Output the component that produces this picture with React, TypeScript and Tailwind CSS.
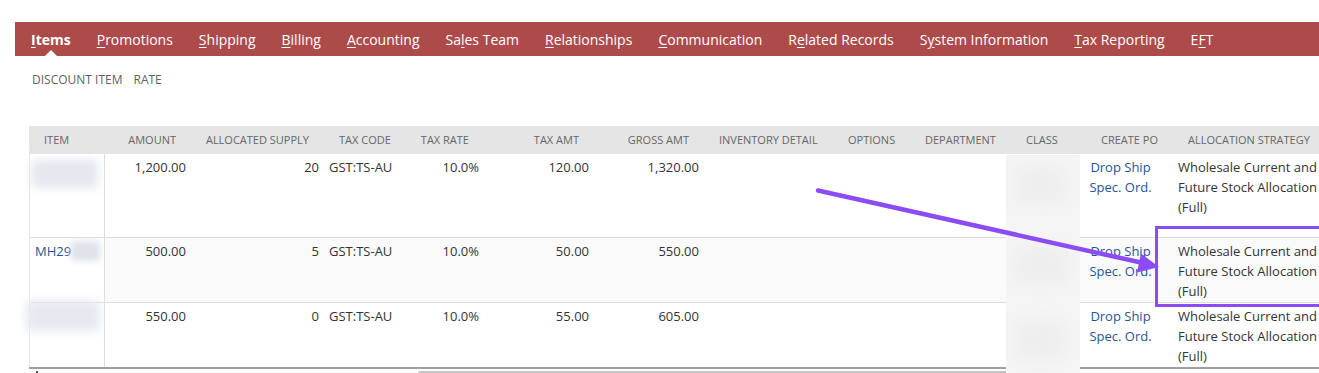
import React from "react";

const font = { fontFamily: '"Open Sans", "Liberation Sans", sans-serif' };

function Tab({ label, u, bold }: { label: string; u: number; bold?: boolean }) {
  return (
    <span className={`relative text-[14px] text-white whitespace-nowrap ${bold ? "font-bold" : ""}`}>
      {label.slice(0, u)}
      <span className="underline underline-offset-2">{label[u]}</span>
      {label.slice(u + 1)}
      {bold && (
        <span className="absolute left-1/2 -translate-x-1/2 top-[21px] w-0 h-0 border-l-[6px] border-r-[6px] border-b-[6px] border-l-transparent border-r-transparent border-b-white" />
      )}
    </span>
  );
}

const cols = [76, 91, 128, 77, 88, 110, 110, 123, 78, 101, 65, 92, 170];

const headers: { t: string; cls: string }[] = [
  { t: "ITEM", cls: "justify-start pl-[15px]" },
  { t: "AMOUNT", cls: "justify-end pr-[20px]" },
  { t: "ALLOCATED SUPPLY", cls: "justify-end pr-[15px]" },
  { t: "TAX CODE", cls: "justify-start pl-[15px]" },
  { t: "TAX RATE", cls: "justify-end pr-[20px]" },
  { t: "TAX AMT", cls: "justify-end pr-[20px]" },
  { t: "GROSS AMT", cls: "justify-end pr-[20px]" },
  { t: "INVENTORY DETAIL", cls: "justify-start pl-[10px]" },
  { t: "OPTIONS", cls: "justify-start pl-[16px]" },
  { t: "DEPARTMENT", cls: "justify-start pl-[15px]" },
  { t: "CLASS", cls: "justify-start pl-[15px]" },
  { t: "CREATE PO", cls: "justify-start pl-[25px]" },
  { t: "ALLOCATION STRATEGY", cls: "justify-start pl-[20px]" },
];

type Row = {
  h: number;
  bg: string;
  item: React.ReactNode;
  amount: string;
  supply: string;
  taxAmt: string;
  gross: string;
};

const rows: Row[] = [
  {
    h: 84,
    bg: "bg-white",
    item: (
      <div className="absolute left-[2px] top-[6px] w-[66px] h-[28px] bg-[#e4e7ee] blur-[5px]" />
    ),
    amount: "1,200.00",
    supply: "20",
    taxAmt: "120.00",
    gross: "1,320.00",
  },
  {
    h: 65,
    bg: "bg-[#fafafa]",
    item: (
      <>
        <span className="text-[#255599] pl-[5px]">MH29</span>
        <div className="absolute left-[41px] top-[3px] w-[29px] h-[20px] bg-[#dfe3ea] blur-[3px]" />
      </>
    ),
    amount: "500.00",
    supply: "5",
    taxAmt: "50.00",
    gross: "550.00",
  },
  {
    h: 64,
    bg: "bg-white",
    item: (
      <div className="absolute left-[-4px] top-[-2px] w-[74px] h-[30px] bg-[#e6e9ef] blur-[5px]" />
    ),
    amount: "550.00",
    supply: "0",
    taxAmt: "55.00",
    gross: "605.00",
  },
];

function Cell({ w, className, children }: { w: number; className?: string; children?: React.ReactNode }) {
  return (
    <div className={`shrink-0 ${className ?? ""}`} style={{ width: w }}>
      {children}
    </div>
  );
}

export default function App() {
  return (
    <div className="relative w-[1319px] h-[373px] overflow-hidden bg-white" style={font}>
      <div className="pt-[22px]">
        <div className="ml-[15px] h-[34px] bg-[#ad4b4b] flex items-center pl-[16px] gap-[26px]">
          <Tab label="Items" u={0} bold />
          <Tab label="Promotions" u={0} />
          <Tab label="Shipping" u={0} />
          <Tab label="Billing" u={0} />
          <Tab label="Accounting" u={0} />
          <Tab label="Sales Team" u={2} />
          <Tab label="Relationships" u={0} />
          <Tab label="Communication" u={0} />
          <Tab label="Related Records" u={1} />
          <Tab label="System Information" u={1} />
          <Tab label="Tax Reporting" u={0} />
          <Tab label="EFT" u={1} />
        </div>

        <div className="mt-[16px] pl-[32px] flex gap-[11px] text-[12px] leading-[16px] text-[#5f5f5f]">
          <span>DISCOUNT ITEM</span>
          <span>RATE</span>
        </div>

        <div className="mt-[38px] ml-[29px] w-[1300px]">
          {/* header */}
          <div className="flex h-[28px] bg-[#e5e5e5] text-[11px] text-[#666]">
            {headers.map((h, i) => (
              <Cell key={h.t} w={cols[i]} className={`flex items-center whitespace-nowrap ${h.cls}`}>
                {h.t}
              </Cell>
            ))}
          </div>

          {/* rows */}
          {rows.map((r, ri) => (
            <div
              key={ri}
              className={`flex text-[13px] leading-[20px] text-[#333] border-l border-[#e5e5e5] ${r.bg} ${
                ri < rows.length - 1 ? "border-b border-b-[#dddddd]" : ""
              }`}
              style={{ height: r.h }}
            >
              <Cell w={cols[0] - 1} className="relative pt-[3px] border-r border-[#dddddd] bg-white">
                {r.item}
              </Cell>
              <Cell w={cols[1]} className="pt-[3px] text-right pr-[10px]">{r.amount}</Cell>
              <Cell w={cols[2]} className="pt-[3px] text-right pr-[5px]">{r.supply}</Cell>
              <Cell w={cols[3]} className="pt-[3px] pl-[5px]">GST:TS-AU</Cell>
              <Cell w={cols[4]} className="pt-[3px] text-right pr-[10px]">10.0%</Cell>
              <Cell w={cols[5]} className="pt-[3px] text-right pr-[10px]">{r.taxAmt}</Cell>
              <Cell w={cols[6]} className="pt-[3px] text-right pr-[10px]">{r.gross}</Cell>
              <Cell w={cols[7]} />
              <Cell w={cols[8]} />
              <Cell w={cols[9]} />
              <Cell w={cols[10]} />
              <Cell w={cols[11]} className="pt-[3px] text-center text-[#255599] pr-[3px]">
                <div>Drop Ship</div>
                <div>Spec. Ord.</div>
              </Cell>
              <Cell w={cols[12]} className="pt-[3px] pl-[10px] whitespace-nowrap">
                <div>Wholesale Current and</div>
                <div>Future Stock Allocation</div>
                <div>(Full)</div>
              </Cell>
            </div>
          ))}

          {/* bottom border + scrollbar */}
          <div className="h-[2px] bg-[#a0a0a0]" />
          <div className="relative h-[6px]">
            <div className="absolute left-[7px] top-[2px] w-[2px] h-[2px] bg-[#555]" />
            <div className="absolute left-[389px] top-[2px] w-[600px] h-[4px] bg-[#c4c4c4] rounded-sm" />
          </div>
        </div>
      </div>

      {/* blurred CLASS column overlay */}
      <div className="absolute left-[1006px] top-[155px] w-[74px] h-[218px] bg-[#f5f5f5] overflow-hidden">
        <div className="absolute left-[10px] top-[10px] w-[50px] h-[40px] bg-[#eeeeee] blur-[8px]" />
        <div className="absolute left-[8px] top-[90px] w-[55px] h-[40px] bg-[#eeeeee] blur-[8px]" />
        <div className="absolute left-[10px] top-[165px] w-[50px] h-[40px] bg-[#eeeeee] blur-[8px]" />
      </div>

      {/* annotation */}
      <svg className="absolute left-0 top-0 pointer-events-none" width="1319" height="373" viewBox="0 0 1319 373">
        <rect x="1156.5" y="227.5" width="180" height="78" fill="none" stroke="#8b4cf6" strokeWidth="3" />
        <line x1="818" y1="190.5" x2="1142" y2="262.8" stroke="#8b4cf6" strokeWidth="4.5" strokeLinecap="round" />
        <polygon points="1159,267 1141,253.5 1137,272.5" fill="#8b4cf6" />
      </svg>
    </div>
  );
}
